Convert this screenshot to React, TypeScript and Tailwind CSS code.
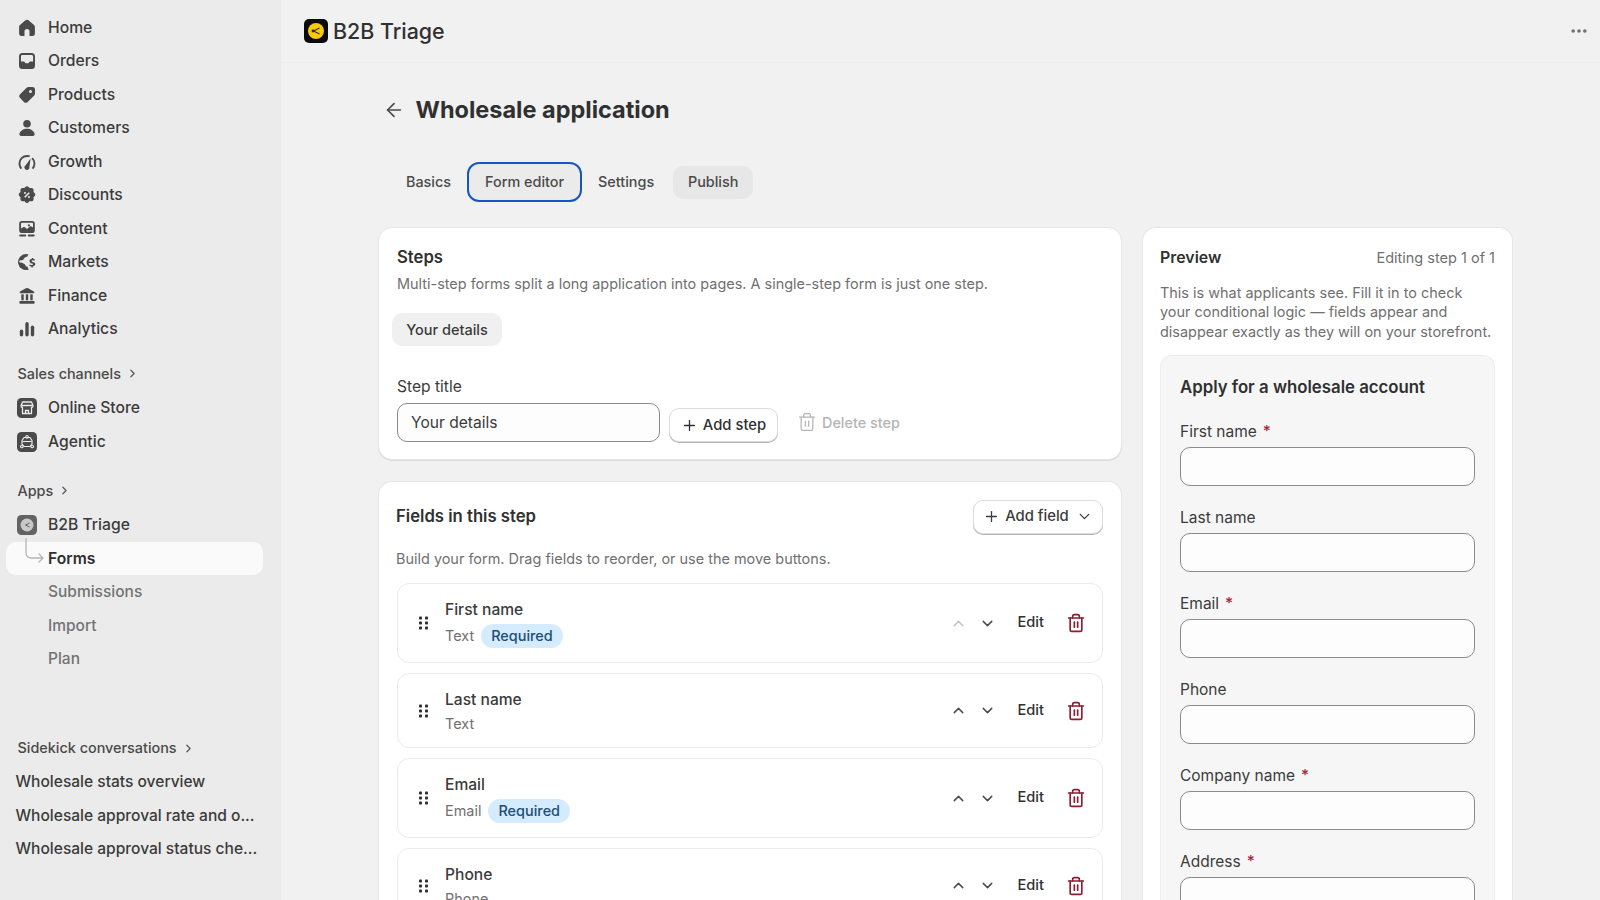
import React from "react";
import { ArrowLeft, ChevronDown, ChevronRight, ChevronUp, MoreHorizontal, Plus, Trash2 } from "lucide-react";

const Ic = ({ children }: { children: React.ReactNode }) => (
  <svg viewBox="0 0 20 20" className="w-5 h-5 shrink-0" fill="#4a4a4a">{children}</svg>
);

const icons: Record<string, React.ReactNode> = {
  Home: <Ic><path d="M10 1.800c-.7 0-1.300.2-1.800.7L3.200 6.800C2.500 7.400 2.100 8.200 2.100 9.100V15.800c0 1.200 1 2.200 2.200 2.200H7.500V13.500a2.500 2.500 0 0 1 5 0V18H15.700c1.200 0 2.200-1 2.200-2.200V9.100c0-.9-.4-1.700-1.100-2.300L11.800 2.500c-.5-.5-1.100-.7-1.800-.7Z" /></Ic>,
  Orders: <Ic><path fillRule="evenodd" d="M5.500 2h9A3.500 3.500 0 0 1 18 5.500v9a3.500 3.500 0 0 1-3.500 3.500h-9A3.500 3.500 0 0 1 2 14.500v-9A3.500 3.500 0 0 1 5.500 2ZM3.900 10.500v-5c0-.9.7-1.600 1.600-1.600h9c.9 0 1.600.7 1.600 1.600v5h-2.600c-.8 0-1.300.4-1.600 1l-.3.700H8.400l-.3-.7c-.3-.6-.8-1-1.600-1H3.900Z" /></Ic>,
  Products: <Ic><path fillRule="evenodd" d="M11.500 2h3.800A2.700 2.700 0 0 1 18 4.700v3.800c0 .7-.3 1.400-.8 1.900l-6.500 6.500a2.700 2.700 0 0 1-3.800 0l-3.800-3.800a2.700 2.700 0 0 1 0-3.800l6.500-6.500c.5-.5 1.200-.8 1.900-.8Zm2 6a1.500 1.500 0 1 0 0-3 1.500 1.500 0 0 0 0 3Z" /></Ic>,
  Customers: <Ic><circle cx="10" cy="5.800" r="3.800" /><path d="M10 10.800c-3.800 0-6.800 2.100-7.600 5-.3 1.100.5 2.200 1.700 2.200h11.800c1.200 0 2-1.100 1.700-2.200-.8-2.900-3.800-5-7.600-5Z" /></Ic>,
  Growth: <Ic><path fillRule="evenodd" d="M10 3a8.500 8.500 0 0 0-8.500 8.500c0 2.200.8 4.200 2.200 5.700l1.400-1.200a6.600 6.600 0 0 1-1.700-4.500A6.600 6.600 0 0 1 10 4.900c.8 0 1.500.1 2.200.4l.9-1.700A8.500 8.500 0 0 0 10 3Zm5.800 2.400-1.300 1.300a6.600 6.600 0 0 1 .3 9.300l1.400 1.200a8.500 8.500 0 0 0-.4-11.800ZM13.600 6.600 8.500 13.400a2.500 2.500 0 1 0 3.900 1.600l1.200-8.400Z" /></Ic>,
  Discounts: <Ic><path fillRule="evenodd" d="M8.100 2.300a2.600 2.600 0 0 1 3.800 0l.8.800 1.100-.1a2.600 2.600 0 0 1 2.800 2.800l-.1 1.100.8.800a2.600 2.600 0 0 1 0 3.800l-.8.800.1 1.100a2.600 2.600 0 0 1-2.800 2.800l-1.100-.1-.8.800a2.600 2.600 0 0 1-3.800 0l-.8-.8-1.100.1a2.600 2.600 0 0 1-2.800-2.800l.1-1.100-.8-.8a2.600 2.600 0 0 1 0-3.800l.8-.8-.1-1.100A2.600 2.600 0 0 1 6.200 3l1.100.1.800-.8ZM12.800 8.300l-1.100-1.100-4.500 4.500 1.100 1.100 4.500-4.500ZM8 9a1 1 0 1 0 0-2 1 1 0 0 0 0 2Zm4 4a1 1 0 1 0 0-2 1 1 0 0 0 0 2Z" /></Ic>,
  Content: <Ic><path fillRule="evenodd" d="M5 2h10a2.800 2.800 0 0 1 2.800 2.800v6.400A2.800 2.800 0 0 1 15 14H5a2.800 2.800 0 0 1-2.800-2.800V4.800A2.800 2.800 0 0 1 5 2ZM4 9.600V4.800c0-.5.500-1 1-1h10c.5 0 1 .5 1 1v3.800l-1.600-1.100c-.5-.3-1.100-.3-1.500.1L10 10 7.800 8.300c-.5-.4-1.100-.4-1.600 0L4 9.600ZM13 6.300a1.100 1.100 0 1 1-2.200 0 1.100 1.100 0 0 1 2.200 0Z" /><rect x="2.200" y="15.600" width="7" height="1.800" rx=".9" /><rect x="10.800" y="15.600" width="7" height="1.800" rx=".9" /></Ic>,
  Markets: <Ic><path d="M9 2a8 8 0 1 0 2.800 15.500 5 5 0 0 1-1.300-3H9l-1.200-2.300L5 10.800l-2.900-.6c.1-.6.300-1.200.6-1.700l3.300-.5 1.800-2.500 2.600-1 .7-1.400c.2-.2.400-.4.700-.5A8 8 0 0 0 9 2Z" /><path d="M15 5.800v1c-1.500.2-2.500 1.100-2.500 2.400 0 1.300 1 1.900 2.300 2.200.9.200 1.200.5 1.200.9 0 .5-.5.800-1.200.8-.7 0-1.300-.2-2-.7l-.6 1.300c.6.400 1.400.7 2.200.8v1.100h1.400v-1.100c1.500-.2 2.500-1.100 2.500-2.400 0-1.300-1-1.900-2.400-2.200-.9-.2-1.200-.5-1.200-.9 0-.4.500-.7 1.100-.7.500 0 1.100.2 1.600.5l.6-1.300c-.6-.3-1.100-.5-1.700-.6v-1H15Z" /></Ic>,
  Finance: <Ic><path d="M8.900 2.300a2.200 2.200 0 0 1 2.200 0l5.800 3.300c.8.500.5 1.700-.5 1.700H3.600c-1 0-1.300-1.200-.5-1.700l5.800-3.300Z" /><rect x="4.300" y="8.300" width="2.400" height="6" /><rect x="8.800" y="8.300" width="2.400" height="6" /><rect x="13.300" y="8.300" width="2.400" height="6" /><rect x="2.400" y="15" width="15.200" height="2.800" rx=".8" /></Ic>,
  Analytics: <Ic><rect x="2.800" y="10.500" width="3.400" height="7" rx="1.700" /><rect x="8.300" y="3" width="3.400" height="14.500" rx="1.700" /><rect x="13.800" y="6.500" width="3.400" height="11" rx="1.700" /></Ic>,
};

const Tile = ({ children }: { children: React.ReactNode }) => (
  <svg viewBox="0 0 20 20" className="w-5 h-5 shrink-0">
    <rect width="20" height="20" rx="4.500" fill="#4a4a4a" />
    {children}
  </svg>
);

const mainNav = ["Home", "Orders", "Products", "Customers", "Growth", "Discounts", "Content", "Markets", "Finance", "Analytics"];

const NavRow = ({ label, icon, className = "" }: { label: string; icon?: React.ReactNode; className?: string }) => (
  <div className={`flex h-[33.5px] shrink-0 items-center gap-3 pl-[11px] text-[15.700px] font-medium text-[#3b3b3b] ${className}`}>
    {icon ?? <span className="w-5 h-5 shrink-0" />}
    <span className="ml-[-1px]">{label}</span>
  </div>
);

const SectionHead = ({ label, className = "" }: { label: string; className?: string }) => (
  <div className={`flex h-[33.5px] shrink-0 items-center gap-[5px] pl-[11.5px] text-[14.400px] font-medium text-[#4a4a4a] ${className}`}>
    <span>{label}</span>
    <ChevronRight size={13} strokeWidth={2.2} color="#555" />
  </div>
);

function Sidebar() {
  return (
    <aside className="flex h-[900px] w-[281px] shrink-0 flex-col overflow-hidden bg-[#ebebeb] pl-[6px] pr-[18px] pt-[11px]">
      {mainNav.map((n) => (
        <NavRow key={n} label={n} icon={icons[n]} />
      ))}
      <SectionHead label="Sales channels" className="mb-[1px] mt-[11px]" />
      <NavRow
        label="Online Store"
        icon={
          <Tile>
            <path d="M5.500 4h9l1.500 3.800a2 2 0 0 1-1.500 1.700v6h-9v-6A2 2 0 0 1 4 7.800L5.500 4Z" fill="none" stroke="#ebebeb" strokeWidth="1.300" strokeLinejoin="round" />
            <path d="M4.500 7.500h11M8.500 15.500v-3h3v3" fill="none" stroke="#ebebeb" strokeWidth="1.300" />
          </Tile>
        }
      />
      <NavRow
        label="Agentic"
        icon={
          <Tile>
            <path d="M7 5.500h6l2 3v3.500l-2 2.500H7l-2-2.500V8.500l2-3Z" fill="none" stroke="#ebebeb" strokeWidth="1.200" strokeLinejoin="round" />
            <circle cx="10" cy="4.800" r="1.300" fill="none" stroke="#ebebeb" strokeWidth="1.100" />
            <circle cx="4.800" cy="14.500" r="1.300" fill="none" stroke="#ebebeb" strokeWidth="1.100" />
            <circle cx="15.200" cy="14.500" r="1.300" fill="none" stroke="#ebebeb" strokeWidth="1.100" />
            <path d="M5.500 9.500h9" fill="none" stroke="#ebebeb" strokeWidth="1.100" />
          </Tile>
        }
      />
      <SectionHead label="Apps" className="mb-[1px] mt-[15.500px]" />
      <NavRow
        label="B2B Triage"
        icon={
          <svg viewBox="0 0 20 20" className="w-5 h-5 shrink-0">
            <rect width="20" height="20" rx="4.500" fill="#636363" />
            <circle cx="10" cy="10" r="6.500" fill="#c9c9c9" />
            <path d="M12.500 8 8.500 10l4 2" fill="none" stroke="#636363" strokeWidth="1" />
          </svg>
        }
      />
      <div className="relative flex h-[33px] shrink-0 items-center gap-3 rounded-[10px] bg-[#fafafa] pl-[11px] text-[15.700px] font-semibold text-[#303030]">
        <svg viewBox="0 0 20 34" className="absolute left-[19px] top-[-4px] h-[34px] w-5" fill="none" stroke="#b5b5b5" strokeWidth="1.300">
          <path d="M1 0v15a5 5 0 0 0 5 5h12M14 16l4 4-4 4" strokeLinecap="round" strokeLinejoin="round" />
        </svg>
        <span className="w-5 h-5 shrink-0" />
        <span className="ml-[-1px]">Forms</span>
      </div>
      {["Submissions", "Import", "Plan"].map((n) => (
        <div key={n} className="flex h-[33.5px] shrink-0 items-center pl-[42px] text-[15.500px] font-medium text-[#737373]">{n}</div>
      ))}
      <SectionHead label="Sidekick conversations" className="mt-[56px]" />
      {["Wholesale stats overview", "Wholesale approval rate and o...", "Wholesale approval status che..."].map((n) => (
        <div key={n} className="flex h-[33.5px] shrink-0 items-center whitespace-nowrap pl-[9.500px] text-[15.550px] font-medium text-[#3b3b3b]">{n}</div>
      ))}
    </aside>
  );
}

const Grip = () => (
  <svg viewBox="0 0 10 16" className="h-4 w-[10px] shrink-0" fill="#303030">
    {[1.500, 6.500, 11.500].map((y) => (
      <React.Fragment key={y}>
        <rect x="0" y={y} width="3" height="3" rx="0.800" />
        <rect x="6" y={y} width="3" height="3" rx="0.800" />
      </React.Fragment>
    ))}
  </svg>
);

const FieldRow = ({ name, type, required, h, upDisabled }: { name: string; type: string; required?: boolean; h: string; upDisabled?: boolean }) => (
  <div className={`flex shrink-0 items-center rounded-[12px] border border-[#ebebeb] bg-white pl-[21px] pr-[16px] ${h}`}>
    <Grip />
    <div className={`ml-[16px] flex min-w-0 flex-1 flex-col ${required ? "" : "pt-[1px]"}`}>
      <span className="text-[15.600px] font-medium leading-[24px] text-[#3b3b3b]">{name}</span>
      <div className={`flex items-center gap-[7px] text-[14.450px] text-[#707070] ${required ? "mt-[2px] leading-[24px]" : "leading-[23px]"}`}>
        <span>{type}</span>
        {required && (
          <span className="rounded-full bg-[#d5ebff] px-[10px] font-medium leading-[24px] text-[#1c4f74]">Required</span>
        )}
      </div>
    </div>
    <ChevronUp size={17} strokeWidth={2} color={upDisabled ? "#c4c4c4" : "#4a4a4a"} className="mr-[12px]" />
    <ChevronDown size={17} strokeWidth={2} color="#4a4a4a" />
    <span className="ml-[22px] mr-[22px] text-[14.600px] font-medium text-[#303030]">Edit</span>
    <Trash2 size={20} strokeWidth={2} color="#8e1f33" />
  </div>
);

const PreviewField = ({ label, required }: { label: string; required?: boolean }) => (
  <div className="flex flex-col">
    <div className="flex h-[16px] items-center gap-[6px] text-[15.500px] text-[#3b3b3b]">
      <span>{label}</span>
      {required && <span className="font-medium text-[#b0233d]">*</span>}
    </div>
    <div className="mt-[8px] h-[39px] shrink-0 rounded-[10px] border border-[#8a8a8a] bg-[#fdfdfd]" />
  </div>
);

export default function App() {
  return (
    <div className="flex h-[900px] w-[1600px] overflow-hidden bg-[#f1f1f1] font-['Inter',sans-serif] text-[#303030]">
      <Sidebar />
      <main className="flex h-[900px] min-w-0 flex-1 flex-col overflow-hidden">
        <header className="flex h-[63px] shrink-0 items-center justify-between border-b border-[#ececec] pl-[23px] pr-[11px]">
          <div className="flex items-center gap-[5px]">
            <svg viewBox="0 0 24 24" className="h-6 w-6">
              <rect width="24" height="24" rx="5" fill="#0b0b0b" />
              <circle cx="12" cy="12" r="8" fill="#f5cb0c" />
              <path d="M15.500 9 9.500 12l6 3" fill="none" stroke="#3a3000" strokeWidth="1.200" />
              <circle cx="9" cy="12" r="1.400" fill="#3a3000" />
            </svg>
            <span className="text-[21.400px] font-medium text-[#303030]">B2B Triage</span>
          </div>
          <MoreHorizontal size={20} color="#707070" strokeWidth={2.400} />
        </header>
        <div className="flex min-h-0 flex-1 flex-col pl-[97px] pr-[87px]">
          <div className="mt-[27px] flex h-[40px] shrink-0 items-center">
            <ArrowLeft size={22} strokeWidth={1.800} color="#4a4a4a" className="ml-[5px]" />
            <h1 className="ml-[10.500px] text-[23.500px] font-bold text-[#303030]">Wholesale application</h1>
          </div>
          <div className="mt-[32px] flex h-[40px] shrink-0 items-center pl-[13px] text-[14.400px] font-medium text-[#4a4a4a]">
            <span className="px-[15px]">Basics</span>
            <span className="ml-[1px] flex h-[40px] w-[115px] items-center justify-center rounded-[12px] border-[2.500px] border-[#1656c0] bg-[#ebebeb]">Form editor</span>
            <span className="px-[16px]">Settings</span>
            <span className="ml-[3px] flex h-[33px] w-[80px] items-center justify-center rounded-[10px] bg-[#e7e7e7]">Publish</span>
          </div>
          <div className="mt-[25px] flex min-h-0 flex-1 gap-[20px]">
            <div className="flex w-[744px] shrink-0 flex-col gap-[21px]">
              <section className="flex h-[233px] shrink-0 flex-col rounded-[14px] border border-[#e6e6e6] bg-white pl-[18px] pr-[17px] pt-[17px] shadow-[0_1px_0_#dcdcdc]">
                <h2 className="text-[16.700px] font-semibold leading-[24px] text-[#303030]">Steps</h2>
                <p className="mt-[3px] text-[14.450px] leading-[24px] text-[#707070]">Multi-step forms split a long application into pages. A single-step form is just one step.</p>
                <span className="ml-[-5px] mt-[17px] flex h-[33px] w-[110px] items-center justify-center rounded-[10px] bg-[#f0f0f0] text-[14.500px] font-medium text-[#3b3b3b]">Your details</span>
                <label className="mt-[29px] text-[15.600px] leading-[24px] text-[#3b3b3b]">Step title</label>
                <div className="mt-[4px] flex items-center">
                  <div className="flex h-[39px] w-[263px] items-center rounded-[10px] border border-[#8a8a8a] bg-[#fdfdfd] px-[13px] text-[15.600px] text-[#3b3b3b]">Your details</div>
                  <button className="ml-[9px] mt-[5px] flex h-[34px] w-[109px] items-center justify-center gap-[5px] rounded-[10px] border border-[#dcdcdc] bg-white text-[14.800px] font-medium text-[#303030] shadow-[0_1px_0_#b5b5b5]">
                    <Plus size={17} strokeWidth={1.800} />
                    Add step
                  </button>
                  <div className="ml-[19px] flex items-center gap-[5px] text-[14.400px] font-medium text-[#b5b5b5]">
                    <Trash2 size={20} strokeWidth={1.500} color="#b5b5b5" />
                    Delete step
                  </div>
                </div>
              </section>
              <section className="flex min-h-0 flex-1 flex-col overflow-hidden rounded-t-[14px] border border-b-0 border-[#e6e6e6] bg-white pl-[17px] pr-[18px] pt-[17px]">
                <div className="flex h-[35px] shrink-0 items-center justify-between">
                  <h2 className="text-[16.700px] font-semibold text-[#303030]">Fields in this step</h2>
                  <button className="flex h-[34px] w-[130px] items-center justify-center gap-[5px] rounded-[10px] border border-[#dcdcdc] bg-white text-[14.800px] font-medium text-[#3b3b3b] shadow-[0_1px_0_#b5b5b5]">
                    <Plus size={17} strokeWidth={1.800} />
                    Add field
                    <ChevronDown size={17} strokeWidth={1.800} className="ml-[2px]" />
                  </button>
                </div>
                <p className="mt-[13px] shrink-0 text-[14.450px] leading-[24px] text-[#707070]">Build your form. Drag fields to reorder, or use the move buttons.</p>
                <div className="ml-[1px] mt-[12px] flex flex-col gap-[10px]">
                  <FieldRow name="First name" type="Text" required h="h-[80px]" upDisabled />
                  <FieldRow name="Last name" type="Text" h="h-[75px]" />
                  <FieldRow name="Email" type="Email" required h="h-[80px]" />
                  <FieldRow name="Phone" type="Phone" h="h-[75px]" />
                </div>
              </section>
            </div>
            <section className="flex w-[371px] shrink-0 flex-col overflow-hidden rounded-t-[14px] border border-b-0 border-[#e6e6e6] bg-white px-[17px] pt-[18px]">
              <div className="flex h-[24px] shrink-0 items-center justify-between">
                <h2 className="text-[15.900px] font-semibold text-[#303030]">Preview</h2>
                <span className="text-[14.500px] text-[#707070]">Editing step 1 of 1</span>
              </div>
              <p className="mt-[13px] shrink-0 text-[14.450px] leading-[19.400px] text-[#707070]">
                This is what applicants see. Fill it in to check your conditional logic — fields appear and disappear exactly as they will on your storefront.
              </p>
              <div className="mt-[14px] flex min-h-0 flex-1 flex-col gap-[25px] rounded-t-[12px] border border-b-0 border-[#ececec] bg-[#f6f6f6] px-[19px] pt-[20px]">
                <h3 className="h-[22px] shrink-0 text-[16.800px] font-semibold leading-[22px] text-[#303030]">Apply for a wholesale account</h3>
                <div className="flex flex-col gap-[23px]">
                  <PreviewField label="First name" required />
                  <PreviewField label="Last name" />
                  <PreviewField label="Email" required />
                  <PreviewField label="Phone" />
                  <PreviewField label="Company name" required />
                  <PreviewField label="Address" required />
                </div>
              </div>
            </section>
          </div>
        </div>
      </main>
    </div>
  );
}
